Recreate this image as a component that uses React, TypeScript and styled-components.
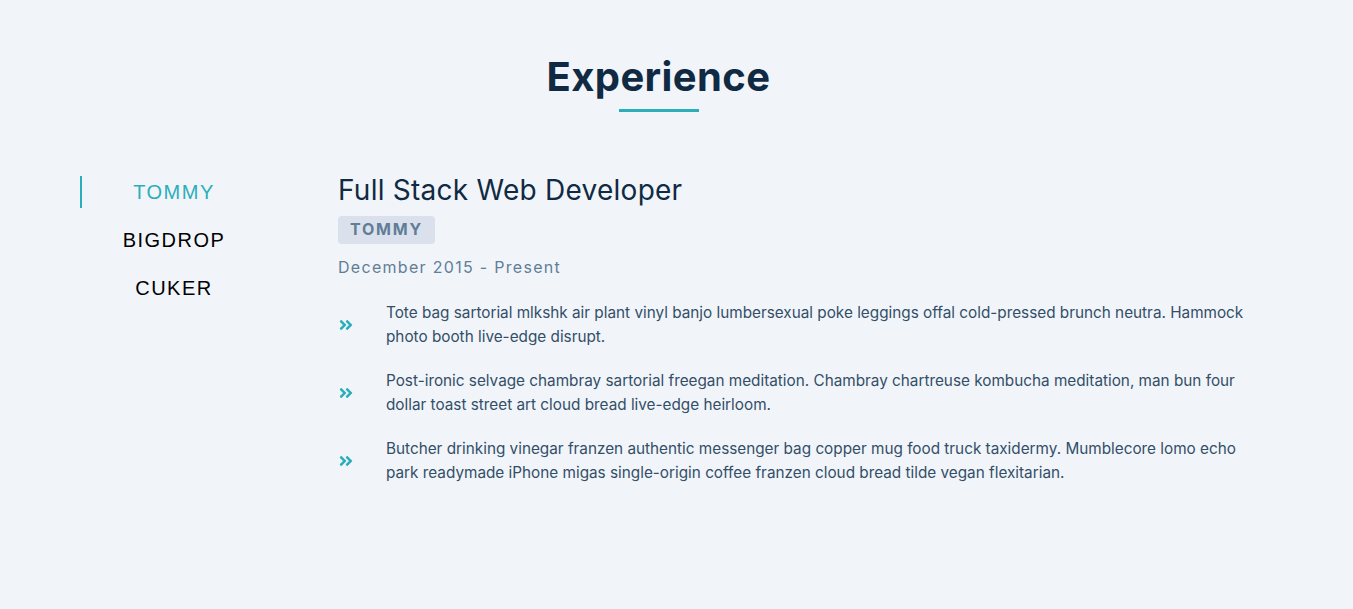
import styled, { createGlobalStyle } from "styled-components";
import { useState } from "react";
import { FaAngleDoubleRight } from "react-icons/fa";

const GlobalStyle = createGlobalStyle`
  * { box-sizing: border-box; }
  body {
    margin: 0;
    background: #f1f5f9;
    font-family: Inter, "Noto Sans", sans-serif;
  }
`;

const Section = styled.section`
  min-height: 609px;
  padding: 52px 100px 0 80px;
`;

const Title = styled.div`
  text-align: center;
  margin: 0 16px 64px 0;
  h2 {
    margin: 0;
    font-size: 40px;
    line-height: 50px;
    font-weight: 700;
    letter-spacing: 0.4px;
    color: #102a43;
  }
`;

const Underline = styled.div`
  width: 80px;
  height: 3px;
  margin: 7px auto 0;
  background: #2caeba;
`;

const Center = styled.div`
  display: grid;
  grid-template-columns: 186px 1fr;
  column-gap: 72px;
`;

const BtnContainer = styled.div`
  display: flex;
  flex-direction: column;
`;

const JobBtn = styled.button<{ active?: boolean }>`
  background: transparent;
  border: none;
  border-left: 2px solid ${(p) => (p.active ? "#2caeba" : "transparent")};
  height: 32px;
  margin-bottom: 16px;
  padding: 0;
  font-family: "Liberation Sans", Arial, sans-serif;
  font-size: 20px;
  letter-spacing: 1.5px;
  color: ${(p) => (p.active ? "#2caeba" : "#000")};
  cursor: pointer;
`;

const JobInfo = styled.article`
  h3 {
    margin: -3px 0 0;
    font-weight: 400;
    font-size: 28px;
    line-height: 34px;
    letter-spacing: 0.25px;
    color: #102a43;
  }
`;

const Company = styled.h4`
  display: inline-block;
  margin: 9px 0 0;
  padding: 4px 12px 5px;
  background: #dae1ec;
  border-radius: 4px;
  font-size: 16px;
  line-height: 19px;
  font-weight: 700;
  letter-spacing: 1.8px;
  color: #617d98;
`;

const JobDate = styled.p`
  margin: 13px 0 0;
  font-size: 16px;
  letter-spacing: 1.3px;
  color: #617d98;
`;

const Duties = styled.div`
  margin-top: 24px;
`;

const Duty = styled.div`
  display: grid;
  grid-template-columns: 48px 1fr;
  align-items: center;
  margin-bottom: 20px;
  svg {
    color: #2caeba;
    font-size: 16px;
  }
  p {
    margin: 0;
    max-width: 862px;
    font-size: 15.3px;
    line-height: 24px;
    color: #334e68;
  }
`;

const jobs = [
  {
    company: "TOMMY",
    title: "Full Stack Web Developer",
    dates: "December 2015 - Present",
    duties: [
      "Tote bag sartorial mlkshk air plant vinyl banjo lumbersexual poke leggings offal cold-pressed brunch neutra. Hammock photo booth live-edge disrupt.",
      "Post-ironic selvage chambray sartorial freegan meditation. Chambray chartreuse kombucha meditation, man bun four dollar toast street art cloud bread live-edge heirloom.",
      "Butcher drinking vinegar franzen authentic messenger bag copper mug food truck taxidermy. Mumblecore lomo echo park readymade iPhone migas single-origin coffee franzen cloud bread tilde vegan flexitarian.",
    ],
  },
  { company: "BIGDROP", title: "Front-End Engineer", dates: "May 2015 - December 2015", duties: [] },
  { company: "CUKER", title: "Engineering Intern", dates: "May 2014 - September 2015", duties: [] },
];

const App = () => {
  const [value, setValue] = useState(0);
  const job = jobs[value];

  return (
    <>
      <GlobalStyle />
      <Section>
        <Title>
          <h2>Experience</h2>
          <Underline />
        </Title>
        <Center>
          <BtnContainer>
            {jobs.map((item, index) => (
              <JobBtn
                key={item.company}
                active={index === value}
                onClick={() => setValue(index)}
              >
                {item.company}
              </JobBtn>
            ))}
          </BtnContainer>
          <JobInfo>
            <h3>{job.title}</h3>
            <Company>{job.company}</Company>
            <JobDate>{job.dates}</JobDate>
            <Duties>
              {job.duties.map((duty) => (
                <Duty key={duty}>
                  <FaAngleDoubleRight />
                  <p>{duty}</p>
                </Duty>
              ))}
            </Duties>
          </JobInfo>
        </Center>
      </Section>
    </>
  );
};

export default App;
